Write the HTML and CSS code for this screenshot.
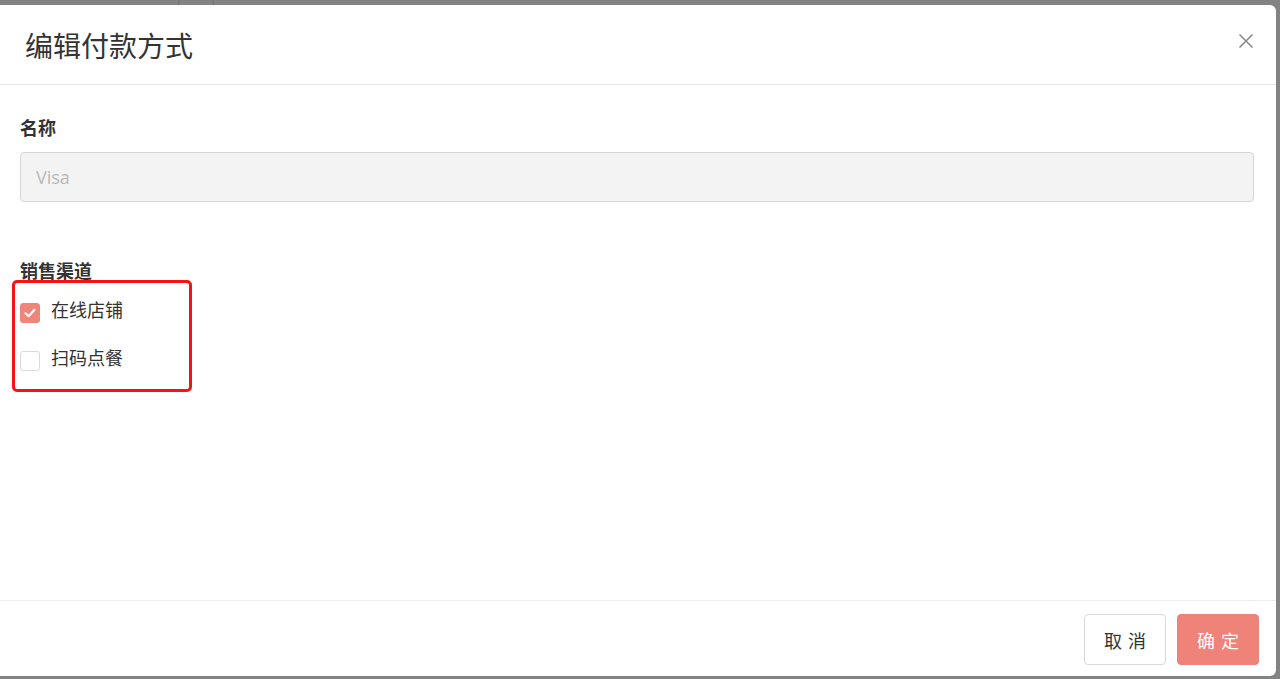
FILE: index.html
```html
<!DOCTYPE html>
<html lang="zh-CN">
<head>
<meta charset="utf-8">
<title>编辑付款方式</title>
<link rel="stylesheet" href="styles.css">
</head>
<body>
<div class="backdrop-circle"></div>
<div class="modal">
  <div class="modal-header">
    <h1 class="modal-title">编辑付款方式</h1>
    <button class="close-btn" aria-label="关闭">
      <svg width="16" height="16" viewBox="0 0 16 16"><path d="M1.5 1.5L14.5 14.5M14.5 1.5L1.5 14.5" stroke="#8a8a8a" stroke-width="1.6" fill="none"/></svg>
    </button>
  </div>
  <div class="modal-body">
    <div class="field-label first">名称</div>
    <div class="text-input"><span class="placeholder">Visa</span></div>
    <div class="field-label second">销售渠道</div>
    <div class="channel-box">
      <label class="check-row">
        <span class="checkbox checked">
          <svg width="14" height="14" viewBox="0 0 14 14"><path d="M2.5 7.2L5.6 10.2L11.5 3.8" stroke="#fff" stroke-width="2.2" fill="none" stroke-linecap="round" stroke-linejoin="round"/></svg>
        </span>
        <span class="check-text">在线店铺</span>
      </label>
      <label class="check-row">
        <span class="checkbox"></span>
        <span class="check-text">扫码点餐</span>
      </label>
    </div>
  </div>
  <div class="modal-footer">
    <button class="btn btn-default">取消</button>
    <button class="btn btn-primary">确定</button>
  </div>
</div>
</body>
</html>
```

FILE: styles.css
```css
* { box-sizing: border-box; }
html, body { margin: 0; padding: 0; }
body {
  background: #838383;
  font-family: "Noto Sans CJK SC", "Noto Sans", sans-serif;
  color: #333;
  height: 679px;
  overflow: hidden;
  position: relative;
}
.backdrop-circle {
  position: absolute;
  left: 178px;
  top: -14px;
  width: 36px;
  height: 36px;
  border-radius: 50%;
  border: 1px solid #6f6f6f;
}
.modal {
  position: relative;
  margin-top: 5px;
  width: 1276px;
  height: 671px;
  background: #fff;
  border-radius: 0 6px 6px 0;
  display: flex;
  flex-direction: column;
}
.modal-header {
  height: 80px;
  border-bottom: 1px solid #e9e9e9;
  display: flex;
  align-items: center;
  justify-content: space-between;
  padding: 0 22px 0 25px;
}
.modal-title {
  margin: 0;
  font-size: 28px;
  font-weight: 400;
  color: #333;
  line-height: 1;
  margin-top: 1px;
}
.close-btn {
  background: none;
  border: 0;
  padding: 0;
  width: 16px;
  height: 16px;
  margin-top: -8px;
  cursor: pointer;
}
.modal-body {
  flex: 1;
  padding: 0 22px 0 20px;
  display: flex;
  flex-direction: column;
  align-items: flex-start;
}
.field-label {
  font-size: 18px;
  font-weight: 700;
  color: #333;
  line-height: 22px;
}
.field-label.first { margin-top: 31px; }
.field-label.second { margin-top: 57px; }
.text-input {
  margin-top: 14px;
  width: 100%;
  height: 50px;
  background: #f3f3f3;
  border: 1px solid #d6d6d6;
  border-radius: 4px;
  display: flex;
  align-items: center;
  padding-left: 15px;
}
.placeholder {
  font-family: "Open Sans", "Noto Sans", sans-serif;
  font-size: 18px;
  color: #b9b9b9;
}
.channel-box {
  margin-left: -8px;
  margin-top: -1px;
  width: 180px;
  border: 3px solid #f5140f;
  border-radius: 5px;
  padding: 4px 0 6px 5px;
}
.check-row {
  height: 48px;
  display: flex;
  align-items: center;
  gap: 11px;
}
.checkbox {
  width: 20px;
  height: 20px;
  margin-top: 4px;
  border: 1px solid #dadada;
  border-radius: 3px;
  background: #fff;
  display: flex;
  align-items: center;
  justify-content: center;
}
.checkbox.checked {
  background: #ee847a;
  border-color: #ee847a;
}
.check-text {
  font-size: 18px;
  color: #333;
  line-height: 24px;
  margin-top: -4px;
}
.modal-footer {
  height: 76px;
  border-top: 1px solid #eeeeee;
  display: flex;
  justify-content: flex-end;
  align-items: flex-start;
  gap: 11px;
  padding: 13px 17px 0 0;
}
.btn {
  width: 82px;
  height: 51px;
  border-radius: 4px;
  font-family: "Noto Sans CJK SC", sans-serif;
  font-size: 18px;
  letter-spacing: 6px;
  padding: 0 0 0 6px;
  cursor: pointer;
}
.btn-default {
  background: #fff;
  border: 1px solid #d9d9d9;
  color: #333;
}
.btn-primary {
  background: #ef8379;
  border: 1px solid #ef8379;
  color: #fff;
}
```
